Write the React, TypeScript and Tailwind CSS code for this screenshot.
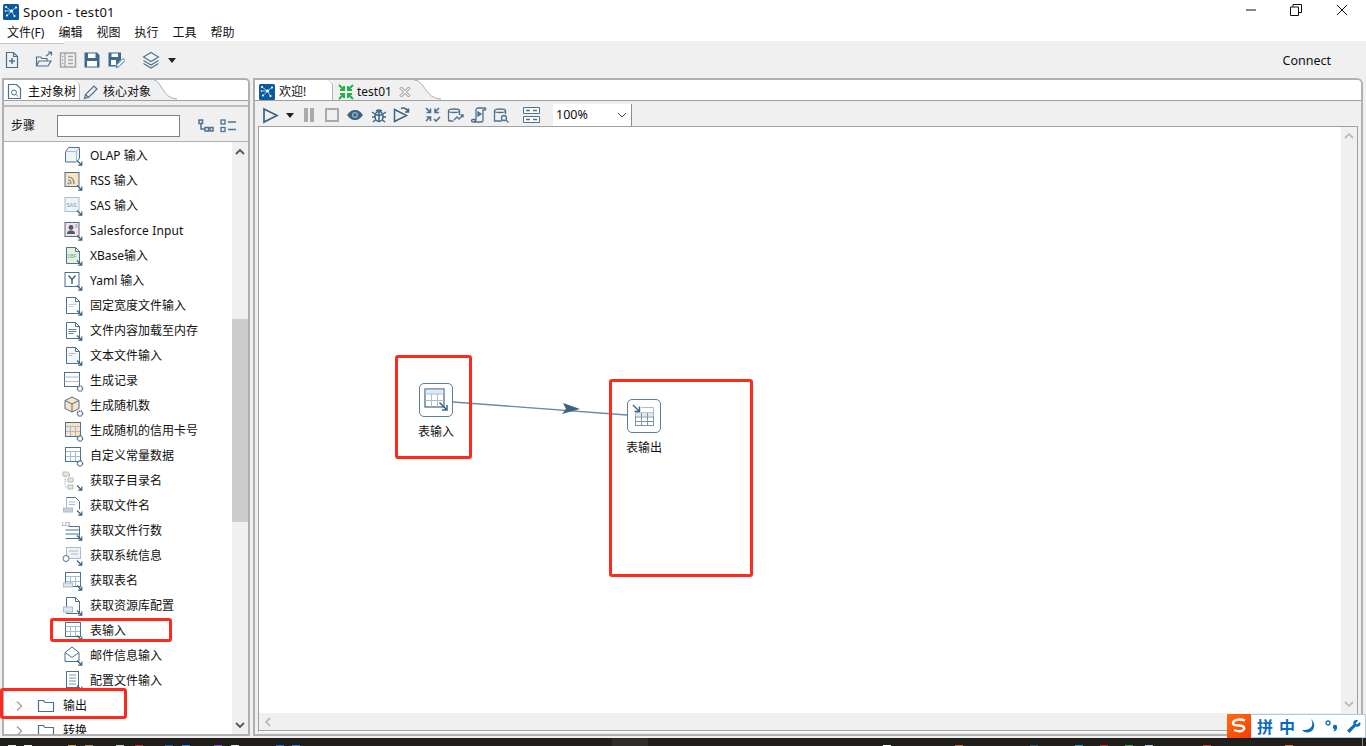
import React from "react";

const B = "#4d7190";
const D = "#3a6384";
const L = "#a9bccb";

function Down() {
  return <path d="M15 15.500l4.500 4.500M19.800 16.500v3.600h-3.600" fill="none" stroke={D} strokeWidth="1.200" />;
}
function Gear() {
  return <circle cx="18" cy="18.500" r="2.600" fill="#fff" stroke={B} strokeWidth="1.400" strokeDasharray="1.600 .5" />;
}
function Grid({ fill }: { fill?: string }) {
  return (
    <g fill="none" stroke={B} strokeWidth="1">
      <rect x="3.500" y="2.500" width="15" height="14" fill={fill || "#fff"} />
      <path d="M3.500 6.500h15M3.500 11.500h15M8.500 6.500v10M13.500 6.500v10" stroke={L} />
      <rect x="3.500" y="2.500" width="15" height="14" />
    </g>
  );
}
function Doc({ fill = "#fff" }: { fill?: string }) {
  return <path d="M4.500 2.500h9l4 4v12h-13z M13.500 2.500v4h4" fill={fill} stroke={B} strokeWidth="1" />;
}

function StepIcon({ k }: { k: string }) {
  const body: Record<string, React.ReactNode> = {
    olap: (
      <>
        <path d="M3.500 6.500l3-4h11v11l-3 3.500h-11z" fill="#eef5fa" stroke={B} />
        <path d="M3.500 6.500h11v10.500M14.500 6.500l3-4" fill="none" stroke={L} />
        <Down />
      </>
    ),
    rss: (
      <>
        <rect x="3" y="2.500" width="14" height="14" fill="#fbe3bd" stroke={B} />
        <path d="M6 7c4 0 6 3 6 7M6 10c2 0 3 2 3 4" fill="none" stroke="#6f7f8c" strokeWidth="1.200" />
        <circle cx="6.500" cy="13.500" r="1" fill="#6f7f8c" />
        <Down />
      </>
    ),
    sas: (
      <>
        <rect x="3" y="2.500" width="14" height="14" fill="#eef3f8" stroke={L} />
        <text x="4.500" y="11.500" fontSize="5" fill="#7d93a6" fontFamily="Liberation Sans">SAS</text>
        <Down />
      </>
    ),
    sf: (
      <>
        <rect x="3" y="2.500" width="14" height="14" fill="#fbdfe3" stroke={B} />
        <circle cx="9" cy="7.500" r="2.400" fill="#3f5f7a" />
        <path d="M5 14c0-3 2-3.500 4-3.500s4 .5 4 3.500z" fill="#3f5f7a" />
        <path d="M13 5h2.500M13 7h2.500" stroke="#8b9db0" />
        <Down />
      </>
    ),
    dbf: (
      <>
        <Doc fill="#e3f2da" />
        <text x="5.500" y="13" fontSize="4.500" fill="#7d93a6" fontFamily="Liberation Sans">DBF</text>
        <Down />
      </>
    ),
    yaml: (
      <>
        <rect x="3" y="2.500" width="14" height="14" fill="#fff" stroke={B} />
        <path d="M6.500 5.500l3.500 4 3.500-4M10 9.500v4.500" fill="none" stroke="#3f5f7a" strokeWidth="1.400" />
        <Down />
      </>
    ),
    fixed: (
      <>
        <Doc />
        <path d="M6.500 9.500h8M6.500 11.500h5" stroke="#c3ced8" strokeWidth="1.200" />
        <Down />
      </>
    ),
    mem: (
      <>
        <Doc />
        <path d="M6.500 9.500h8M6.500 11.500h8M6.500 13.500h5" stroke="#5f7d96" strokeWidth="1.100" />
        <Down />
      </>
    ),
    text: (
      <>
        <Doc fill="#f5f8fb" />
        <path d="M6.500 8.500h7M6.500 10.500h4" stroke="#aebdcb" strokeWidth="1.200" />
        <Down />
      </>
    ),
    rec: (
      <>
        <rect x="2.500" y="2.500" width="15" height="14" fill="#fff" stroke={B} />
        <path d="M2.500 7h15M2.500 11.500h15" stroke={L} />
        <Gear />
      </>
    ),
    rand: (
      <>
        <path d="M10 2l7 3.500v8L10 17l-7-3.500v-8z" fill="#fae3c3" stroke={B} />
        <path d="M3 5.500l7 3.500 7-3.500M10 9v8" fill="none" stroke={B} />
        <Gear />
      </>
    ),
    card: (
      <>
        <Grid fill="#fae3c3" />
        <Gear />
      </>
    ),
    grid: (
      <>
        <Grid />
        <Gear />
      </>
    ),
    tree: (
      <>
        <path d="M1 2h5l1.500 1.500V6H1zM6 8h5v4H6zM6 15h5v4H6z" fill="#fae3c3" stroke={L} />
        <path d="M3 6v11h3M3 10h3" fill="none" stroke={L} strokeDasharray="1.500 1" />
        <Down />
      </>
    ),
    fname: (
      <>
        <path d="M4.500 2.500h9l4 4v8" fill="#fff" stroke={B} />
        <path d="M4.500 2.500v10M7 7h6M7 9.500h6" fill="none" stroke={L} />
        <rect x="1.500" y="13" width="9" height="4" fill="#c5d1dc" stroke={L} />
        <Down />
      </>
    ),
    rows: (
      <>
        <text x="-1" y="6" fontSize="5.500" fill="#7d8d9c" fontFamily="Liberation Sans">123</text>
        <path d="M6.500 6.500h11v12h-14M3.500 10h14M3.500 14h14" fill="none" stroke={B} />
        <Down />
      </>
    ),
    sys: (
      <>
        <rect x="4.500" y="2.500" width="14" height="11" fill="#eef3f8" stroke={L} />
        <path d="M7 6h9M9 9h7" stroke={L} />
        <circle cx="4" cy="13.500" r="3" fill="#fff" stroke={B} />
        <Down />
      </>
    ),
    tname: (
      <>
        <Grid />
        <rect x="1.500" y="13" width="9" height="4" fill="#dfe6ec" stroke={L} />
        <Down />
      </>
    ),
    repo: (
      <>
        <Doc />
        <rect x="1.500" y="12" width="9" height="5" fill="#dfe6ec" stroke={L} />
        <Down />
      </>
    ),
    table: (
      <>
        <Grid />
        <Down />
      </>
    ),
    mail: (
      <>
        <path d="M3 7.500L10 2l7 5.500v9H3z" fill="#fff" stroke={B} />
        <path d="M3 7.500l7 5 7-5" fill="none" stroke={B} />
        <Down />
      </>
    ),
    cfg: (
      <>
        <rect x="4.500" y="1.500" width="12" height="16" fill="#fff" stroke={B} />
        <path d="M7 5h7M7 8h7M7 11h7M7 14h7" stroke="#7f96aa" />
        <Down />
      </>
    ),
  };
  return (
    <svg width="22" height="22" viewBox="0 0 22 22" className="shrink-0">
      {body[k]}
    </svg>
  );
}

const items: [string, string][] = [
  ["olap", "OLAP 输入"],
  ["rss", "RSS 输入"],
  ["sas", "SAS 输入"],
  ["sf", "Salesforce Input"],
  ["dbf", "XBase输入"],
  ["yaml", "Yaml 输入"],
  ["fixed", "固定宽度文件输入"],
  ["mem", "文件内容加载至内存"],
  ["text", "文本文件输入"],
  ["rec", "生成记录"],
  ["rand", "生成随机数"],
  ["card", "生成随机的信用卡号"],
  ["grid", "自定义常量数据"],
  ["tree", "获取子目录名"],
  ["fname", "获取文件名"],
  ["rows", "获取文件行数"],
  ["sys", "获取系统信息"],
  ["tname", "获取表名"],
  ["repo", "获取资源库配置"],
  ["table", "表输入"],
  ["mail", "邮件信息输入"],
  ["cfg", "配置文件输入"],
];

function Ico({ w = 18, h = 18, vb = "0 0 18 18", className = "", children }: { w?: number; h?: number; vb?: string; className?: string; children: React.ReactNode }) {
  return (
    <svg width={w} height={h} viewBox={vb} className={"shrink-0 " + className} fill="none" stroke={B}>
      {children}
    </svg>
  );
}

function SpoonLogo({ s = 16 }: { s?: number }) {
  return (
    <svg width={s} height={s} viewBox="0 0 16 16" className="shrink-0">
      <rect width="16" height="16" rx="1.500" fill="#0b5aa0" />
      <path d="M8.500 7L3 3M8.500 7l4.500-3.500M8.500 7L4 11.500M8.500 7l3 5M8.500 7H2.500" stroke="#bfe0fa" strokeWidth=".8" />
      <circle cx="8.500" cy="7" r="1.600" fill="#fff" />
      <circle cx="3" cy="3" r="1.100" fill="#fff" />
      <circle cx="13" cy="3.500" r="1.100" fill="#fff" />
      <circle cx="4" cy="11.500" r="1.100" fill="#fff" />
      <circle cx="11.500" cy="12" r="1.100" fill="#fff" />
      <circle cx="2.500" cy="7" r=".8" fill="#fff" />
    </svg>
  );
}

function StepRow({ k, t }: { k: string; t: string }) {
  return (
    <div className="h-[25px] flex items-center pl-[58px] gap-[6px] shrink-0">
      <StepIcon k={k} />
      <span className={k === "sf" ? "whitespace-nowrap tracking-[0.14px]" : "whitespace-nowrap"}>{t}</span>
    </div>
  );
}

function FolderRow({ t }: { t: string }) {
  return (
    <div className="h-[25px] flex items-center pl-[10px] shrink-0">
      <svg width="12" height="12" viewBox="0 0 12 12" className="shrink-0" fill="none" stroke="#a6a6a6" strokeWidth="1.500">
        <path d="M3 1.500L7.500 6 3 10.500" />
      </svg>
      <svg width="18" height="16" viewBox="0 0 18 16" className="shrink-0 ml-[11px]" fill="none" stroke={B} strokeWidth="1.200">
        <path d="M1.500 13.500v-11h5l1.500 2h8.500v9z" />
      </svg>
      <span className="ml-[8px]">{t}</span>
    </div>
  );
}

function Table({ out }: { out?: boolean }) {
  return out ? (
    <svg width="24" height="24" viewBox="0 0 24 24">
      <path d="M9 3.500h12.500v18H3.500V10" fill="#fff" stroke={L} />
      <rect x="3.500" y="9" width="18" height="12.500" fill="#fff" stroke="#7c97ac" />
      <rect x="3.500" y="9" width="18" height="3" fill="#dfe8ef" />
      <path d="M3.500 13h18M3.500 17.500h18M9.500 9v12.500M15.500 9v12.500" stroke="#7c97ac" />
      <path d="M1 1l6 6M7.500 2.500v5H2.500" fill="none" stroke={D} strokeWidth="1.400" />
    </svg>
  ) : (
    <svg width="26" height="26" viewBox="0 0 26 26">
      <rect x="2" y="2" width="19" height="18" fill="#fff" stroke={B} strokeWidth="1.300" />
      <rect x="2.700" y="2.700" width="17.600" height="4" fill="#dcebf7" />
      <path d="M2 7h19M2 13.500h19M8.500 7v13M14.500 7v13" stroke={L} />
      <path d="M16.500 15.500l7 7M24 18v5h-5" fill="none" stroke={D} strokeWidth="1.500" />
    </svg>
  );
}

const sepBars: [number, string][] = [
  [8, "#e8e8e8"], [24, "#eee"], [68, "#c9a227"], [85, "#b78a5e"], [116, "#ccc"], [135, "#e02020"],
  [165, "#1d5fa8"], [182, "#1e90ff"], [214, "#8a4fd0"], [231, "#eee"], [276, "#1976d2"], [292, "#2f80ed"],
  [883, "#fff"], [955, "#e0672a"], [1030, "#37506b"], [1075, "#2a9fd6"], [1100, "#e02020"], [1125, "#3fa34d"],
  [1145, "#a9c8dc"], [1203, "#e03020"], [1285, "#e8742a"],
];

function Node({ x, y, label, children }: { x: number; y: number; label: string; children: React.ReactNode }) {
  return (
    <div className="absolute w-[34px] flex flex-col items-center" style={{ left: x, top: y }}>
      <div className="w-[34px] h-[34px] shrink-0 bg-white border border-[#5f7f9a] rounded-[5px] flex items-center justify-center">
        {children}
      </div>
      <span className="mt-[6px] whitespace-nowrap">{label}</span>
    </div>
  );
}

export default function App() {
  return (
    <div
      className="relative w-[1366px] h-[746px] overflow-hidden flex flex-col bg-[#f0f0f0] text-[12px] text-[#111]"
      style={{ fontFamily: '"Noto Sans", "Noto Sans CJK SC", sans-serif' }}
    >
      {/* Title bar */}
      <div className="h-[23px] shrink-0 bg-white flex items-center pl-[3px] pt-[1px]">
        <SpoonLogo />
        <span className="ml-[4px] mt-[1px] text-[13px] tracking-[0.3px]">Spoon - test01</span>
        <div className="ml-auto flex items-center mb-[5px]">
          <svg width="12" height="12" viewBox="0 0 12 12" className="mr-[33px]"><path d="M1 6h10" stroke="#111" strokeWidth="1" /></svg>
          <svg width="12" height="12" viewBox="0 0 12 12" className="mr-[34px]" fill="none" stroke="#111"><path d="M.5 3h8v8.500h-8zM3 3V.5h8.500V8.500H8.500" /></svg>
          <svg width="12" height="12" viewBox="0 0 12 12" className="mr-[18px]" fill="none" stroke="#111"><path d="M1 1l10 10M11 1L1 11" /></svg>
        </div>
      </div>
      {/* Menu bar */}
      <div className="h-[18px] shrink-0 bg-white flex items-center pl-[7px] pt-[2px] gap-[14px]">
        <span>文件(F)</span>
        <span>编辑</span>
        <span>视图</span>
        <span>执行</span>
        <span>工具</span>
        <span>帮助</span>
      </div>
      {/* Main toolbar */}
      <div className="h-[37px] shrink-0 flex flex-col">
        <div className="h-[3px] w-[64px] bg-white border-b border-[#c4c4c4] shrink-0" />
        <div className="flex-1 flex items-center pl-[3px] pb-[2px]">
          <Ico>
            <path d="M3.500 1.500h7l4 4v11h-11z M10.500 1.500v4h4" strokeWidth="1.200" />
            <path d="M6 10h6M9 7v6" strokeWidth="1.500" />
          </Ico>
          <Ico className="ml-[14px]">
            <path d="M1.500 15V6h4l1.500 1.500h5V10M1.500 15l2.500-5h12l-3 5z" strokeWidth="1.200" />
            <path d="M11 5l5-3.500M13 1h3.500v3.500" strokeWidth="1.200" />
          </Ico>
          <Ico className="ml-[6px]">
            <rect x="1.500" y="2" width="15" height="14" stroke="#a5a5a5" strokeWidth="1.500" />
            <path d="M6 2v14M9 5.500h5M9 9h5M9 12.500h5M3 5.500h1.500M3 9h1.500M3 12.500h1.500" stroke="#a5a5a5" strokeWidth="1.300" />
          </Ico>
          <svg width="18" height="18" viewBox="0 0 18 18" className="ml-[6px] shrink-0">
            <path d="M1.500 1.500h12.500l2.500 2.500v12.500h-15z" fill="#3f6a8c" />
            <rect x="5" y="2.500" width="7.500" height="4.500" fill="#fff" />
            <rect x="4" y="10" width="10" height="5.500" fill="#fff" />
          </svg>
          <svg width="18" height="18" viewBox="0 0 18 18" className="ml-[6px] shrink-0">
            <path d="M1.500 1.500h12.500v7l-6 7h-6.500z" fill="#3f6a8c" />
            <rect x="4.500" y="2.500" width="6.500" height="3.500" fill="#fff" />
            <rect x="4" y="9" width="5" height="5" fill="#fff" />
            <path d="M9 16.500l1-3 6-6 2 2-6 6z" fill="#fff" stroke="#3f6a8c" />
          </svg>
          <Ico className="ml-[17px]">
            <path d="M9 1.500l7.500 4.500L9 10.500 1.500 6zM1.500 9.500L9 14l7.500-4.500M1.500 12.500L9 17l7.500-4.500" strokeWidth="1.100" />
          </Ico>
          <svg width="8" height="5" viewBox="0 0 8 5" className="ml-[8px] shrink-0"><path d="M0 0h8L4 5z" fill="#222" /></svg>
          <span className="ml-auto mr-[35px] mt-[3px] text-[12.500px]">Connect</span>
        </div>
      </div>

      {/* Content */}
      <div className="flex-1 min-h-0 flex pl-[2px] pr-[3px] gap-[3px]">
        {/* Left panel */}
        <div className="w-[248px] h-[658px] shrink-0 border-2 border-[#b0b0b0] rounded-tr-[5px] flex flex-col bg-[#f0f0f0] overflow-hidden">
          <div className="h-[21px] shrink-0 bg-white border-b border-[#a0a0a0] flex relative">
            <div className="w-[76px] flex items-center pl-[2px] pt-[3px] gap-[5px] border-r border-[#b0b0b0] rounded-tr-[6px]">
              <svg width="17" height="17" viewBox="0 0 17 17" fill="none" stroke={B} className="shrink-0">
                <path d="M2.500 1.500h8l4 4v10h-12z" strokeWidth="1.200" />
                <circle cx="8" cy="9.500" r="2.500" /><path d="M10 11.500l2 2" />
              </svg>
              <span>主对象树</span>
            </div>
            <div className="w-[73px] bg-[#f0f0f0] flex items-center pl-[3px] pt-[3px] gap-[4px]">
              <svg width="16" height="16" viewBox="0 0 16 16" fill="none" stroke={B} strokeWidth="1.200" className="shrink-0">
                <path d="M1.500 14.500l1-4L11 2l3 3-8.500 8.500zM2.500 10.500l3 3" />
              </svg>
              <span className="whitespace-nowrap">核心对象</span>
            </div>
            <svg width="24" height="20" viewBox="0 0 24 20" className="shrink-0">
              <path d="M0 0h1C8 0 10 19 24 19v1H0z" fill="#f0f0f0" />
              <path d="M1 0C8 0 10 19 24 19" fill="none" stroke="#b0b0b0" />
            </svg>
          </div>
          <div className="h-[6px] shrink-0 border-b-2 border-[#bdbdbd] bg-[#efefef]" />
          <div className="h-[35px] shrink-0 flex items-center pl-[7px] pt-[3px] border-b border-[#b0b0b0]">
            <span className="w-[46px]">步骤</span>
            <div className="w-[123px] h-[22px] bg-white border border-[#808080] shrink-0" />
            <svg width="16" height="14" viewBox="0 0 16 14" className="ml-[18px] shrink-0" fill="none" stroke={B} strokeWidth="1.500">
              <rect x="1" y="1" width="3.500" height="3.500" /><rect x="7" y="8.500" width="3.500" height="3.500" /><rect x="12" y="8.500" width="3" height="3.500" /><path d="M3 5v5h4" />
            </svg>
            <svg width="17" height="14" viewBox="0 0 17 14" className="ml-[6px] shrink-0" fill="none" stroke={B} strokeWidth="1.300">
              <rect x="1" y="1" width="4" height="4" /><rect x="1" y="8.500" width="4" height="4" /><path d="M8 3h8M8 10.500h8" />
            </svg>
          </div>
          <div className="flex-1 min-h-0 flex bg-white overflow-hidden">
            <div className="flex-1 min-w-0 flex flex-col pt-[1px] overflow-hidden">
              {items.map(([k, t]) => (
                <StepRow key={t} k={k} t={t} />
              ))}
              <FolderRow t="输出" />
              <FolderRow t="转换" />
            </div>
            <div className="w-[16px] shrink-0 bg-[#f0f0f0] flex flex-col items-center">
              <svg width="10" height="8" viewBox="0 0 10 8" className="mt-[6px] shrink-0" fill="none" stroke="#555" strokeWidth="1.800"><path d="M1 6l4-4 4 4" /></svg>
              <div className="w-full h-[203px] mt-[163px] bg-[#cdcdcd] shrink-0" />
              <svg width="10" height="8" viewBox="0 0 10 8" className="mt-auto mb-[5px] shrink-0" fill="none" stroke="#555" strokeWidth="1.800"><path d="M1 2l4 4 4-4" /></svg>
            </div>
          </div>
        </div>

        {/* Right panel */}
        <div className="w-[1110px] h-[658px] shrink-0 border-2 border-[#b0b0b0] rounded-tr-[6px] flex flex-col bg-[#f0f0f0] overflow-hidden">
          <div className="h-[21px] shrink-0 bg-white border-b border-[#a0a0a0] flex">
            <div className="w-[78px] flex items-center pl-[4px] pt-[3px] gap-[4px] border-r border-[#b0b0b0] rounded-tr-[6px]">
              <SpoonLogo />
              <span>欢迎!</span>
            </div>
            <div className="w-[80px] bg-[#f0f0f0] flex items-center pl-[5px] pt-[3px]">
              <svg width="16" height="16" viewBox="0 0 16 16" className="shrink-0" fill="none" stroke="#22b14c" strokeWidth="2">
                <path d="M1 1l5 5M6 2v4H2M15 1l-5 5M10 2v4h4M1 15l5-5M6 14v-4H2M15 15l-5-5M10 14v-4h4" />
              </svg>
              <span className="ml-[3px]">test01</span>
              <svg width="12" height="12" viewBox="0 0 12 12" className="ml-[7px] shrink-0" fill="none" stroke="#8a8a8a">
                <path d="M2.500 1L6 4.500 9.500 1 11 2.500 7.500 6 11 9.500 9.500 11 6 7.500 2.500 11 1 9.500 4.500 6 1 2.500z" />
              </svg>
            </div>
            <svg width="28" height="20" viewBox="0 0 28 20" className="shrink-0">
              <path d="M0 0h1C12 0 12 19 28 19v1H0z" fill="#f0f0f0" />
              <path d="M1 0C12 0 12 19 28 19" fill="none" stroke="#b0b0b0" />
            </svg>
          </div>
          <div className="h-[25px] shrink-0 flex items-center pl-[7px] pt-[3px]">
            <svg width="17" height="17" viewBox="0 0 17 17" className="shrink-0" fill="none" stroke={D} strokeWidth="1.700"><path d="M2 2l13 6.500L2 15z" /></svg>
            <svg width="8" height="5" viewBox="0 0 8 5" className="ml-[7px] shrink-0"><path d="M0 0h8L4 5z" fill="#222" /></svg>
            <svg width="12" height="14" viewBox="0 0 12 14" className="ml-[9px] shrink-0"><path d="M1 0h4v14H1zM7 0h4v14H7z" fill="#a9a9a9" /></svg>
            <svg width="14" height="14" viewBox="0 0 14 14" className="ml-[10px] shrink-0" fill="none" stroke="#a9a9a9" strokeWidth="2"><rect x="1" y="1" width="12" height="12" /></svg>
            <svg width="16" height="12" viewBox="0 0 16 12" className="ml-[8px] shrink-0"><path d="M0 6c3-4 5-5 8-5s5 1 8 5c-3 4-5 5-8 5S3 10 0 6z" fill={D} /><circle cx="8" cy="6" r="3" fill="#8fb1cb" /><circle cx="8" cy="6" r="1.700" fill={D} /></svg>
            <svg width="16" height="16" viewBox="0 0 16 16" className="ml-[8px] shrink-0" fill="none" stroke={D} strokeWidth="1.500"><ellipse cx="8" cy="9.500" rx="4" ry="5" /><path d="M5.500 4.500c0-2 5-2 5 0M4 7L1 5M4 10H1M4.500 13L2 15M12 7l3-2M12 10h3M11.500 13l2.500 2M8 5v9M4.500 8h7" /></svg>
            <svg width="17" height="16" viewBox="0 0 17 16" className="ml-[6px] shrink-0" fill="none" stroke={D} strokeWidth="1.500"><path d="M1.500 2.500l12 6-12 6zM8 1.500c3-1 6 0 7 3M15.500 1.500v3.500H12" /></svg>
            <svg width="16" height="16" viewBox="0 0 16 16" className="ml-[15px] shrink-0" fill="none" stroke={B} strokeWidth="1.600"><path d="M1 1l4 4M5.500 1.500v4H1.500M14 1l-4 4M10 1.500v4h4M1 14l4-4M5.500 14v-4H1.500M9 12l2 2 4-4" /></svg>
            <svg width="17" height="16" viewBox="0 0 17 16" className="ml-[6px] shrink-0" fill="none" stroke={B} strokeWidth="1.300"><path d="M1.500 14V3.500c0-2 11-2 11 0V8M1.500 4c0 2 11 2 11 0M1.500 14h5M7 13l3-3 2 2 4-4M13.500 8H16v2.500" /></svg>
            <svg width="17" height="16" viewBox="0 0 17 16" className="ml-[6px] shrink-0" fill="none" stroke={B} strokeWidth="1.300"><path d="M4 14.500c2 0 2-1 2-2V3c0-1 1-2 2-2h7c1 0 1 2 0 2h-2v10c0 1-1 2-2 2H3c-2 0-2-2.500 0-2.500h3" /><path d="M8 5l3 2-3 2z" fill={B} /></svg>
            <svg width="17" height="16" viewBox="0 0 17 16" className="ml-[6px] shrink-0" fill="none" stroke={B} strokeWidth="1.300"><path d="M9 14H1.500V3.500c0-2 11-2 11 0V7M1.500 4c0 2 11 2 11 0" /><circle cx="11" cy="11" r="2.500" /><path d="M13 13l2.500 2.500" /></svg>
            <svg width="17" height="16" viewBox="0 0 17 16" className="ml-[13px] shrink-0"><path d="M.5.500h16v6H.5zM.5 9.500h16v6H.5z" fill="#fff" stroke={B} /><path d="M3 3.500h4M10 3.500h4M3 12.500h4M10 12.500h4" stroke={B} strokeWidth="1.400" /></svg>
            <div className="ml-[13px] w-[79px] h-[22px] bg-white border-r border-[#8f8f8f] flex items-center justify-between pl-[3px] pr-[4px] shrink-0">
              <span className="text-[12.500px]">100%</span>
              <svg width="10" height="6" viewBox="0 0 10 6" fill="none" stroke="#444"><path d="M1 1l4 4 4-4" /></svg>
            </div>
          </div>
          {/* Canvas area */}
          <div className="flex-1 min-h-0 mx-[3px] border-t border-x border-[#a0a0a0] flex flex-col">
            <div className="flex-1 min-h-0 flex bg-white">
              <div className="flex-1 min-w-0 relative">
                <svg width="400" height="300" viewBox="0 0 400 300" className="absolute left-0 top-0">
                  <path d="M194 275L368 288" stroke="#6b8aa3" strokeWidth="1.300" fill="none" />
                  <path d="M304 276l17 6-18 5 4-5z" fill="#3a6384" />
                </svg>
                <Node x={160} y={256} label="表输入"><Table /></Node>
                <Node x={368} y={272} label="表输出"><Table out /></Node>
              </div>
              <div className="w-[16px] shrink-0 bg-[#f0f0f0] flex flex-col items-center justify-between py-[5px]">
                <svg width="10" height="8" viewBox="0 0 10 8" fill="none" stroke="#bcbcbc" strokeWidth="1.800"><path d="M1 6l4-4 4 4" /></svg>
                <svg width="10" height="8" viewBox="0 0 10 8" fill="none" stroke="#bcbcbc" strokeWidth="1.800"><path d="M1 2l4 4 4-4" /></svg>
              </div>
            </div>
            <div className="h-[17px] shrink-0 bg-[#f0f0f0] flex items-center pl-[5px]">
              <svg width="8" height="10" viewBox="0 0 8 10" fill="none" stroke="#bcbcbc" strokeWidth="1.800"><path d="M6 1L2 5l4 4" /></svg>
            </div>
            <div className="h-[2px] shrink-0 border-t border-[#a0a0a0] bg-white" />
          </div>
          <div className="h-[2px] shrink-0" />
        </div>
      </div>

      {/* Taskbar */}
      <div className="h-[8px] shrink-0 bg-[#201f1c] relative mt-[2px] overflow-hidden">
        <div className="absolute left-[612px] top-0 w-[36px] h-[8px] bg-[#2e2d2b]" />
        {sepBars.map(([x, c]) => (
          <div key={x} className="absolute bottom-0 w-[8px] h-[1px]" style={{ left: x, backgroundColor: c }} />
        ))}
        <div className="absolute right-[3px] top-0 w-[1px] h-[8px] bg-[#888]" />
      </div>

      {/* IME bar */}
      <div className="absolute left-[1227px] top-[714px] w-[139px] h-[24px] flex bg-white border-y border-r border-[#a9c9ef]">
        <div className="w-[24px] -my-[1px] h-[24px] bg-gradient-to-br from-[#ff6a14] to-[#f73c00] flex items-center justify-center shrink-0">
          <svg width="18" height="16" viewBox="0 0 18 16" fill="none" stroke="#fff" strokeWidth="2.400"><path d="M15 2.500C11 1 4 1 3 4.500c-.5 3 4 3 6 3s6 .5 5 3.500c-1.500 3-6 2.500-10 1" /></svg>
        </div>
        <div className="flex-1 flex items-center pl-[6px] text-[#0b6bbf] font-bold text-[16px]" style={{ fontFamily: '"Noto Sans CJK SC", sans-serif' }}>
          <span>拼</span>
          <span className="ml-[6px]">中</span>
          <svg width="14" height="14" viewBox="0 0 14 14" className="ml-[7px] shrink-0"><path d="M9 0c3 5 1 11-7 11-1 0-1.500 0-2-.5C1 13 5 14 8 13c5-2 6-9 1-13z" fill="#0b6bbf" /></svg>
          <svg width="14" height="14" viewBox="0 0 14 14" className="ml-[9px] shrink-0"><circle cx="3" cy="4" r="2" fill="none" stroke="#0b6bbf" strokeWidth="1.300" /><circle cx="10" cy="8" r="2.200" fill="#0b6bbf" /><path d="M11.500 8c0 2-1 3-2.500 4" stroke="#0b6bbf" strokeWidth="1.500" fill="none" /></svg>
          <svg width="15" height="15" viewBox="0 0 15 15" className="ml-[7px] shrink-0"><path d="M14 3l-3 2.500-1.500-1L12 1.500C9.500 0 6.500 2 7.500 5.500L1 11.500 3.500 14l6-6.500C13 8.500 15.500 6 14 3z" fill="#0b6bbf" /></svg>
        </div>
      </div>

      {/* Red annotation boxes */}
      <div className="absolute left-[50px] top-[618px] w-[122px] h-[24px] border-[3px] border-[#ff2a1c] rounded-[3px]" />
      <div className="absolute left-0 top-[688px] w-[127px] h-[31px] border-[3px] border-[#ff2a1c] rounded-[3px]" />
      <div className="absolute left-[395px] top-[355px] w-[77px] h-[104px] border-[3px] border-[#ff2a1c] rounded-[3px]" />
      <div className="absolute left-[609px] top-[379px] w-[144px] h-[198px] border-[3px] border-[#ff2a1c] rounded-[3px]" />
    </div>
  );
}
